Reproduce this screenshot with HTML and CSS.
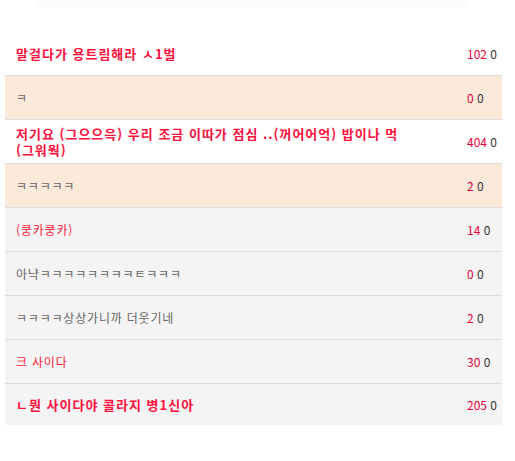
FILE: index.html
```html
<!DOCTYPE html>
<html lang="ko">
<head>
    <meta charset="UTF-8">
    <title>댓글 목록</title>
    <link rel="stylesheet" href="styles.css">
</head>
<body>
    <div class="topbar"></div>
    <ul class="list">
        <li class="row">
            <span class="title hot">말걸다가 용트림해라 ㅅ1벌</span>
            <span class="count"><em>102</em> 0</span>
        </li>
        <li class="row peach">
            <span class="title">ㅋ</span>
            <span class="count"><em>0</em> 0</span>
        </li>
        <li class="row">
            <span class="title hot">저기요 (그으으윽) 우리 조금 이따가 점심 ..(꺼어어억) 밥이나 먹 (그워웍)</span>
            <span class="count"><em>404</em> 0</span>
        </li>
        <li class="row peach">
            <span class="title">ㅋㅋㅋㅋㅋ</span>
            <span class="count"><em>2</em> 0</span>
        </li>
        <li class="row gray">
            <span class="title red">(쿵카쿵카)</span>
            <span class="count"><em>14</em> 0</span>
        </li>
        <li class="row gray">
            <span class="title">아냑ㅋㅋㅋㅋㅋㅋㅋㅋㅌㅋㅋㅋ</span>
            <span class="count"><em>0</em> 0</span>
        </li>
        <li class="row gray">
            <span class="title">ㅋㅋㅋㅋ상상가니까 더웃기네</span>
            <span class="count"><em>2</em> 0</span>
        </li>
        <li class="row gray">
            <span class="title red">크 사이다</span>
            <span class="count"><em>30</em> 0</span>
        </li>
        <li class="row gray last">
            <span class="title hot">ㄴ뭔 사이다야 콜라지 병1신아</span>
            <span class="count"><em>205</em> 0</span>
        </li>
    </ul>
</body>
</html>
```

FILE: styles.css
```css
body {
    margin: 0;
    font-family: "Noto Sans CJK KR", "Noto Sans", sans-serif;
    font-size: 12px;
    color: #666;
    background: #fff;
}

.topbar {
    width: 435px;
    height: 7px;
    margin-left: 35px;
    background: #fcfcfc;
}

.list {
    list-style: none;
    width: 497px;
    margin: 25px 0 0 5px;
    padding: 0;
}

.row {
    display: flex;
    align-items: center;
    min-height: 43px;
    padding-left: 11px;
    border-bottom: 1px solid #dddddd;
    background: #fff;
}

.row.peach {
    background: #fbeada;
}

.row.gray {
    background: #f4f4f4;
}

.row.last {
    min-height: 41px;
    border-bottom: 0;
}

.title {
    flex: 1;
    padding-right: 16px;
    line-height: 16px;
    letter-spacing: 0.8px;
    word-break: keep-all;
}

.title.hot {
    font-size: 13px;
    font-weight: bold;
    letter-spacing: 1px;
    color: #ff0f3c;
}

.title.red {
    color: #ff1a3a;
}

.count {
    width: 35px;
    color: #333;
    white-space: nowrap;
}

.count em {
    font-style: normal;
    color: #e8003d;
}
```
